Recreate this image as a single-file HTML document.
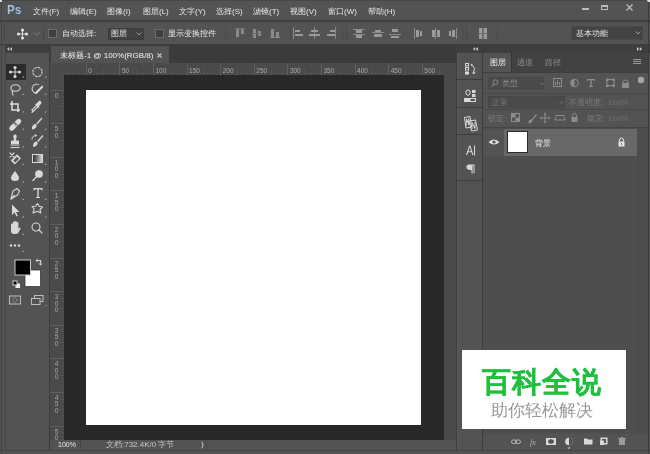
<!DOCTYPE html>
<html><head><meta charset="utf-8">
<style>
*{margin:0;padding:0;box-sizing:border-box}
html,body{width:650px;height:454px;overflow:hidden;-webkit-font-smoothing:antialiased;background:#535353;font-family:"Liberation Sans",sans-serif;color:#e6e6e6}
.a{position:absolute}
.t{position:absolute;white-space:nowrap;font-size:8px;line-height:9px;-webkit-font-smoothing:antialiased;will-change:transform}
svg{position:absolute;overflow:visible;will-change:transform}
.ic{fill:none;stroke:#dcdcdc;stroke-width:1.2}
.f{fill:#dcdcdc;stroke:none}
.dim{color:#8c8c8c}
</style></head><body>

<!-- ===== MENU BAR ===== -->
<div class="a" style="left:0;top:0;width:650px;height:21px;background:#535353"></div>
<div class="a" style="left:0;top:20px;width:650px;height:2px;background:#404040"></div>
<div class="a" style="left:7px;top:4px;width:17px;height:12px;background:#4d5257"></div>
<div class="t" style="left:7px;top:3px;font-size:13.5px;line-height:14px;font-weight:bold;color:#a9c2dc;letter-spacing:0.6px;transform:scaleX(0.84);transform-origin:0 0">Ps</div>
<div class="t" style="left:33px;top:7px">文件(F)</div>
<div class="t" style="left:70px;top:7px">编辑(E)</div>
<div class="t" style="left:107px;top:7px">图像(I)</div>
<div class="t" style="left:143px;top:7px">图层(L)</div>
<div class="t" style="left:179px;top:7px">文字(Y)</div>
<div class="t" style="left:216px;top:7px">选择(S)</div>
<div class="t" style="left:253px;top:7px">滤镜(T)</div>
<div class="t" style="left:290px;top:7px">视图(V)</div>
<div class="t" style="left:328px;top:7px">窗口(W)</div>
<div class="t" style="left:368px;top:7px">帮助(H)</div>
<!-- window controls -->
<div class="a" style="left:582px;top:8px;width:7px;height:2px;background:#bcbcbc"></div>
<div class="a" style="left:601px;top:5px;width:7px;height:5px;border:1px solid #bcbcbc;border-top-width:2px"></div>
<svg style="left:626px;top:4px" width="7" height="7"><path d="M0.5 0.5L6.5 6.5M6.5 0.5L0.5 6.5" stroke="#bcbcbc" stroke-width="1.3"/></svg>

<!-- ===== OPTIONS BAR ===== -->
<div class="a" style="left:0;top:22px;width:650px;height:22px;background:#535353"></div>
<div class="a" style="left:0;top:44px;width:650px;height:1px;background:#3c3c3c"></div>
<div class="a" style="left:4px;top:24px;width:1px;height:18px;background:#474747"></div>
<svg style="left:17px;top:28px" width="12" height="12"><path d="M5.5 2V10M1.5 6H9.5" stroke="#d8d8d8" stroke-width="1"/><circle cx="5.5" cy="2" r="1.6" fill="#e0e0e0"/><circle cx="5.5" cy="10" r="1.6" fill="#e0e0e0"/><circle cx="1.5" cy="6" r="1.6" fill="#e0e0e0"/><circle cx="9.5" cy="6" r="1.6" fill="#e0e0e0"/></svg>
<svg style="left:33px;top:32px" width="7" height="4"><path d="M0.5 0.5L3.5 3L6.5 0.5" stroke="#7e7e7e" fill="none"/></svg>
<div class="a" style="left:43px;top:26px;width:1px;height:16px;background:#474747"></div>
<div class="a" style="left:48px;top:29px;width:9px;height:9px;border:1px solid #6c6c6c;background:#3f3f3f"></div>
<div class="t" style="left:62px;top:29px">自动选择:</div>
<div class="a" style="left:108px;top:28px;width:36px;height:12px;background:#414141;border:1px solid #3c3c3c"></div>
<div class="t" style="left:111px;top:29px">图层</div>
<svg style="left:136px;top:32px" width="6" height="4"><path d="M0.5 0.5L3 3L5.5 0.5" stroke="#9a9a9a" fill="none"/></svg>
<div class="a" style="left:155px;top:29px;width:9px;height:9px;border:1px solid #6c6c6c;background:#3f3f3f"></div>
<div class="t" style="left:168px;top:29px">显示变换控件</div>
<div class="a" style="left:225px;top:26px;width:1px;height:15px;background:#4b4b4b"></div>
<!-- align icons -->
<div id="alignicons">
<div class="a" style="left:236px;top:29px;width:3px;height:8px;background:#8a8a8a"></div>
<div class="a" style="left:241px;top:29px;width:3px;height:5px;background:#8a8a8a"></div>
<div class="a" style="left:235px;top:28px;width:10px;height:1px;background:#6e6e6e"></div>

<div class="a" style="left:253px;top:29px;width:3px;height:9px;background:#8a8a8a"></div>
<div class="a" style="left:258px;top:31px;width:3px;height:5px;background:#8a8a8a"></div>
<div class="a" style="left:252px;top:33px;width:10px;height:1px;background:#6e6e6e"></div>

<div class="a" style="left:271px;top:29px;width:3px;height:8px;background:#8a8a8a"></div>
<div class="a" style="left:276px;top:32px;width:3px;height:5px;background:#8a8a8a"></div>
<div class="a" style="left:270px;top:37px;width:10px;height:1px;background:#8a8a8a"></div>

<div class="a" style="left:290px;top:27px;width:1px;height:13px;background:#4a4a4a"></div>
<div class="a" style="left:293px;top:27px;width:1px;height:12px;background:#8a8a8a"></div>
<div class="a" style="left:295px;top:30px;width:5px;height:2px;background:#9a9a9a"></div>
<div class="a" style="left:295px;top:34px;width:8px;height:2px;background:#9a9a9a"></div>

<div class="a" style="left:314px;top:27px;width:1px;height:12px;background:#8a8a8a"></div>
<div class="a" style="left:311px;top:30px;width:7px;height:2px;background:#9a9a9a"></div>
<div class="a" style="left:309px;top:34px;width:11px;height:2px;background:#9a9a9a"></div>

<div class="a" style="left:335px;top:27px;width:1px;height:12px;background:#8a8a8a"></div>
<div class="a" style="left:330px;top:30px;width:5px;height:2px;background:#9a9a9a"></div>
<div class="a" style="left:327px;top:34px;width:8px;height:2px;background:#9a9a9a"></div>

<div class="a" style="left:342px;top:26px;width:1px;height:15px;background:#4a4a4a"></div>
<div class="a" style="left:346px;top:26px;width:1px;height:15px;background:#4a4a4a"></div>

<div class="a" style="left:353px;top:29px;width:12px;height:1px;background:#8a8a8a"></div>
<div class="a" style="left:356px;top:30px;width:6px;height:3px;background:#9a9a9a"></div>
<div class="a" style="left:353px;top:34px;width:12px;height:1px;background:#8a8a8a"></div>
<div class="a" style="left:356px;top:35px;width:6px;height:3px;background:#9a9a9a"></div>

<div class="a" style="left:372px;top:32px;width:12px;height:1px;background:#8a8a8a"></div>
<div class="a" style="left:375px;top:30px;width:6px;height:2px;background:#9a9a9a"></div>
<div class="a" style="left:374px;top:34px;width:8px;height:3px;background:#9a9a9a"></div>

<div class="a" style="left:389px;top:34px;width:12px;height:1px;background:#8a8a8a"></div>
<div class="a" style="left:392px;top:29px;width:6px;height:3px;background:#9a9a9a"></div>
<div class="a" style="left:391px;top:36px;width:8px;height:2px;background:#9a9a9a"></div>

<div class="a" style="left:414px;top:28px;width:1px;height:11px;background:#8a8a8a"></div>
<div class="a" style="left:416px;top:30px;width:3px;height:7px;background:#9a9a9a"></div>
<div class="a" style="left:420px;top:31px;width:2px;height:5px;background:#9a9a9a"></div>

<div class="a" style="left:435px;top:28px;width:1px;height:11px;background:#8a8a8a"></div>
<div class="a" style="left:432px;top:30px;width:3px;height:7px;background:#9a9a9a"></div>
<div class="a" style="left:437px;top:30px;width:3px;height:7px;background:#9a9a9a"></div>

<div class="a" style="left:456px;top:28px;width:1px;height:11px;background:#8a8a8a"></div>
<div class="a" style="left:452px;top:30px;width:3px;height:7px;background:#9a9a9a"></div>
<div class="a" style="left:449px;top:31px;width:2px;height:5px;background:#9a9a9a"></div>

<div class="a" style="left:462px;top:26px;width:1px;height:15px;background:#4a4a4a"></div>
<div class="a" style="left:466px;top:26px;width:1px;height:15px;background:#4a4a4a"></div>

<div class="a" style="left:479px;top:28px;width:8px;height:11px;background:#9a9a9a"></div>
<div class="a" style="left:482px;top:28px;width:2px;height:11px;background:#6e6e6e"></div>
<div class="a" style="left:479px;top:33px;width:8px;height:1px;background:#6e6e6e"></div>
<div class="a" style="left:497px;top:26px;width:1px;height:15px;background:#4a4a4a"></div>
</div>
<!-- workspace dropdown -->
<div class="a" style="left:571px;top:26px;width:72px;height:14px;background:#434343;border:1px solid #4a4a4a"></div>
<div class="t" style="left:576px;top:29px">基本功能</div>
<svg style="left:635px;top:31px" width="6" height="4"><path d="M0.5 0.5L3 3L5.5 0.5" stroke="#9a9a9a" fill="none"/></svg>

<!-- ===== TOOL PANEL ===== -->
<div class="a" style="left:0;top:45px;width:6px;height:405px;background:#535353"></div>
<div class="a" style="left:5px;top:45px;width:45px;height:405px;background:#535353;border-left:1px solid #4a4a4a;border-right:1px solid #3c3c3c"></div>
<div class="a" style="left:5px;top:45px;width:45px;height:8px;background:#3e3e3e"></div>
<svg style="left:6px;top:46px" width="7" height="6"><path d="M1 3L3.2 1V5ZM3.8 3L6 1V5Z" fill="#c4c4c4"/></svg>
<div class="a" style="left:6px;top:64px;width:20px;height:16px;background:#2b2b2b"></div>
<svg style="left:0;top:0" width="50" height="320" viewBox="0 0 50 320">
<g fill="none" stroke="#d8d8d8" stroke-width="1.1" stroke-linecap="round" stroke-linejoin="round">
<!-- move -->
<path d="M15 68V76.5M10.5 72H19.5" stroke-width="1"/>
<!-- ellipse marquee -->
<circle cx="37.5" cy="72" r="4.6" stroke-dasharray="2 1.6" stroke="#c8c8c8"/>
<!-- lasso -->
<ellipse cx="15.5" cy="88" rx="4.6" ry="3.2"/>
<path d="M12.5 90.5Q12 93 13 95"/>
<!-- quick selection -->
<path d="M35 93Q30.5 90 33 86Q35 83.5 38.5 84.5" stroke-dasharray="1.6 1.2"/>
<!-- crop -->
<path d="M12 101V110H20M10 104H18V112" stroke-width="1.5" stroke-linecap="butt" stroke-linejoin="miter" stroke="#e0e0e0"/>
<!-- eyedropper -->
<path d="M32 112.5L32.8 111.7M33.2 111.5L31.8 110.2L37 105L38.4 106.4Z"/>
<!-- clone stamp -->
<path d="M11 145H19M11 147.5H19"/>
<path d="M32 139Q32 135.5 36 135.5" stroke-width="1"/>
<!-- eraser x -->
<path d="M10 153L14 157M14 153L10 157"/>
<!-- pen -->
<path d="M11 199L13 191L17 188.5L19.5 191L17.5 195L11 199Z"/>
<path d="M11 199L14.5 195.5"/>
<!-- custom shape -->
<path d="M33 213L34.2 209L32 206.5L35.5 206.2L37.5 203.5L39 206.3L42.5 207L40 209.5L40.8 213L37.5 211.3Z"/>
<!-- zoom -->
<circle cx="36" cy="227" r="4"/>
<path d="M39 230L42 233"/>
<!-- dodge -->
<circle cx="39" cy="174" r="3.3" fill="#d8d8d8"/>
<path d="M36.6 176.6L33 180.5" stroke-width="1.4"/>
</g>
<g fill="#d8d8d8" stroke="none">
<!-- move arrowheads -->
<circle cx="15" cy="67.5" r="1.6"/><circle cx="15" cy="76.5" r="1.6"/><circle cx="10.5" cy="72" r="1.6"/><circle cx="19.5" cy="72" r="1.6"/>
<!-- quick selection brush -->
<path d="M35 92.5L41 86.5Q42.5 85 43 86Q43.5 87 42 88.5L36.5 94Q35 94.5 35 92.5Z"/>
<path d="M36.2 103.8L38 102Q39.5 100 41 101.5Q42.5 103 40.5 104.5L38.7 106.3L39.5 107.2L38.6 108L35.2 104.6L36 103.8Z"/>
<!-- healing band-aid -->
<path d="M10 126.5L17 119.5Q18.8 117.8 20.5 119.5Q22.2 121.2 20.5 123L13.5 130Q11.7 131.7 10 130Q8.3 128.3 10 126.5Z"/><path d="M13.5 123.5L16.5 126.5L18 125L15 122Z" fill="#535353"/><circle cx="16" cy="124" r="0.7" fill="#d8d8d8"/><circle cx="14.5" cy="124.5" r="0.5" fill="#d8d8d8"/><circle cx="16.5" cy="125.5" r="0.5" fill="#d8d8d8"/>
<!-- brush -->
<path d="M32 129.5Q31.5 126.5 33.5 124.8Q35 123.5 36.3 124.5Q37.2 125.8 36 127.5Q34.5 129.5 32 129.5Z"/><path d="M36.2 123.6L41.5 117.6L42.4 118.5L37.2 124.5Z"/>
<!-- stamp -->
<path d="M13.3 136.3a1.7 1.7 0 1 1 3.4 0L15.9 140.5H19V144H11V140.5H14.1Z"/><path d="M35 134L37 135.5L35 137Z"/>
<!-- history brush -->
<path d="M33 147Q32.5 144 34.5 142.3Q36 141 37.3 142Q38.2 143.3 37 145Q35.5 147 33 147Z"/><path d="M37.2 141.1L42.5 135.1L43.4 136L38.2 142Z"/>
<!-- eraser -->
<path d="M10.8 160.5L17 154.3L21 158.3L14.8 164.5Z"/><path d="M13.3 160.5L17 156.8L19 158.8L15.3 162.5Z" fill="#535353"/>
<!-- blur drop -->
<path d="M15 171Q19 176 19 178Q19 181 15 181Q11 181 11 178Q11 176 15 171Z"/>
<!-- T -->
<path d="M33.5 188H42.5V190.5H41.8Q41.5 189.2 40 189.2H38.7V197H40V198H36V197H37.3V189.2H36Q34.5 189.2 34.2 190.5H33.5Z"/>
<!-- path selection arrow -->
<path d="M12 204.5V215L14.5 212.5L16.5 216.5L17.8 215.8L16 212H19.5Z"/>
<!-- hand -->
<path d="M11 229V224.5Q11 223.5 12 223.5Q12.8 223.5 12.8 224.5V227.5V222.5Q12.8 221.5 13.8 221.5Q14.7 221.5 14.7 222.5V227V222Q14.7 221 15.7 221Q16.6 221 16.6 222V227V223Q16.6 222 17.5 222Q18.4 222 18.4 223V229Q18.8 228 19.8 227.5Q20.7 227.3 20.7 228.2L18.5 232.5Q17.5 234 15.5 234H14Q11 234 11 231Z"/>
<!-- dots -->
<circle cx="11" cy="245.5" r="1.2"/><circle cx="15" cy="245.5" r="1.2"/><circle cx="19" cy="245.5" r="1.2"/>
<!-- small triangles -->
<path d="M22 77.5h1.8v-1.8z M44.5 77.5h1.8v-1.8z M22 95h1.8v-1.8z M44.5 95h1.8v-1.8z M22 112.5h1.8v-1.8z M44.5 112.5h1.8v-1.8z M22 130h1.8v-1.8z M44.5 130h1.8v-1.8z M22 147.5h1.8v-1.8z M44.5 147.5h1.8v-1.8z M22 165h1.8v-1.8z M44.5 165h1.8v-1.8z M22 182.5h1.8v-1.8z M44.5 182.5h1.8v-1.8z M22 200h1.8v-1.8z M44.5 200h1.8v-1.8z M22 217.5h1.8v-1.8z M44.5 217.5h1.8v-1.8z M22 235h1.8v-1.8z M22 252h1.8v-1.8z" fill="#b0b0b0"/>
</g>
<!-- gradient rect -->
<defs><linearGradient id="gr" x1="0" x2="1"><stop offset="0" stop-color="#222"/><stop offset="1" stop-color="#ddd"/></linearGradient></defs>
<rect x="32.5" y="154.5" width="10" height="8" fill="url(#gr)" stroke="#d8d8d8" stroke-width="1"/>
<!-- fg/bg colors -->
<rect x="25" y="270" width="15.5" height="16.5" fill="#fff" stroke="#3a3a3a" stroke-width="0.8"/>
<rect x="15" y="260" width="15.5" height="15" fill="#000" stroke="#c8c8c8" stroke-width="1"/>
<!-- default colors mini -->
<rect x="15.5" y="283.5" width="4.5" height="4.5" fill="#f0f0f0"/>
<rect x="12.5" y="280.5" width="5" height="5" fill="#d0d0d0"/>
<rect x="13.5" y="281.5" width="3" height="3" fill="#000"/>
<!-- swap -->
<path d="M37 260.5H40.5V263.5" fill="none" stroke="#d8d8d8" stroke-width="1.2"/>
<path d="M35.5 260.5L37.5 258.5V262.5zM40.5 265.5L38.5 263.5H42.5z" fill="#d8d8d8"/>
<!-- quick mask -->
<rect x="9.5" y="296" width="11" height="8" fill="none" stroke="#bdbdbd" stroke-width="1"/>
<circle cx="15" cy="300" r="2.2" fill="none" stroke="#bdbdbd" stroke-width="1" stroke-dasharray="1 1"/>
<!-- screen mode -->
<rect x="34.5" y="295.5" width="8.5" height="6" fill="none" stroke="#bdbdbd" stroke-width="1"/>
<rect x="31.5" y="298.5" width="8.5" height="6" fill="#535353" stroke="#bdbdbd" stroke-width="1"/>
<path d="M45 306h1.5v-1.5z" fill="#aaa"/>
</svg>


<!-- ===== DOCUMENT ===== -->
<div class="a" style="left:50px;top:45px;width:406px;height:18px;background:#3b3b3b"></div>
<div class="a" style="left:51px;top:46px;width:118px;height:17px;background:#535353"></div>
<div class="t" style="left:60px;top:51px;color:#f2f2f2">未标题-1 @ 100%(RGB/8)</div>
<svg style="left:157px;top:53px" width="5" height="5"><path d="M0.5 0.5L4.5 4.5M4.5 0.5L0.5 4.5" stroke="#c0c0c0" stroke-width="1.2"/></svg>
<!-- rulers -->
<div class="a" style="left:50px;top:63px;width:406px;height:12px;background:#4a4a4a"></div>
<div class="a" style="left:50px;top:63px;width:14px;height:377px;background:#4a4a4a"></div>
<div class="a" style="left:64px;top:75px;width:380px;height:365px;background:#282828"></div>
<div class="a" style="left:444px;top:75px;width:12px;height:365px;background:#4a4a4a"></div>
<!--RULERS-->
<svg style="left:64px;top:63px" width="380" height="12"><g stroke-width="1" shape-rendering="crispEdges">
<line x1="2.14" y1="9" x2="2.14" y2="12" stroke="#525252"/>
<line x1="5.50" y1="7" x2="5.50" y2="12" stroke="#585858"/>
<line x1="8.86" y1="9" x2="8.86" y2="12" stroke="#525252"/>
<line x1="12.22" y1="10" x2="12.22" y2="12" stroke="#525252"/>
<line x1="15.58" y1="9" x2="15.58" y2="12" stroke="#525252"/>
<line x1="18.94" y1="10" x2="18.94" y2="12" stroke="#525252"/>
<line x1="22.30" y1="0" x2="22.30" y2="12" stroke="#5f5f5f"/>
<line x1="25.66" y1="10" x2="25.66" y2="12" stroke="#525252"/>
<line x1="29.02" y1="9" x2="29.02" y2="12" stroke="#525252"/>
<line x1="32.38" y1="10" x2="32.38" y2="12" stroke="#525252"/>
<line x1="35.74" y1="9" x2="35.74" y2="12" stroke="#525252"/>
<line x1="39.10" y1="7" x2="39.10" y2="12" stroke="#585858"/>
<line x1="42.46" y1="9" x2="42.46" y2="12" stroke="#525252"/>
<line x1="45.82" y1="10" x2="45.82" y2="12" stroke="#525252"/>
<line x1="49.18" y1="9" x2="49.18" y2="12" stroke="#525252"/>
<line x1="52.54" y1="10" x2="52.54" y2="12" stroke="#525252"/>
<line x1="55.90" y1="0" x2="55.90" y2="12" stroke="#5f5f5f"/>
<line x1="59.26" y1="10" x2="59.26" y2="12" stroke="#525252"/>
<line x1="62.62" y1="9" x2="62.62" y2="12" stroke="#525252"/>
<line x1="65.98" y1="10" x2="65.98" y2="12" stroke="#525252"/>
<line x1="69.34" y1="9" x2="69.34" y2="12" stroke="#525252"/>
<line x1="72.70" y1="7" x2="72.70" y2="12" stroke="#585858"/>
<line x1="76.06" y1="9" x2="76.06" y2="12" stroke="#525252"/>
<line x1="79.42" y1="10" x2="79.42" y2="12" stroke="#525252"/>
<line x1="82.78" y1="9" x2="82.78" y2="12" stroke="#525252"/>
<line x1="86.14" y1="10" x2="86.14" y2="12" stroke="#525252"/>
<line x1="89.50" y1="0" x2="89.50" y2="12" stroke="#5f5f5f"/>
<line x1="92.86" y1="10" x2="92.86" y2="12" stroke="#525252"/>
<line x1="96.22" y1="9" x2="96.22" y2="12" stroke="#525252"/>
<line x1="99.58" y1="10" x2="99.58" y2="12" stroke="#525252"/>
<line x1="102.94" y1="9" x2="102.94" y2="12" stroke="#525252"/>
<line x1="106.30" y1="7" x2="106.30" y2="12" stroke="#585858"/>
<line x1="109.66" y1="9" x2="109.66" y2="12" stroke="#525252"/>
<line x1="113.02" y1="10" x2="113.02" y2="12" stroke="#525252"/>
<line x1="116.38" y1="9" x2="116.38" y2="12" stroke="#525252"/>
<line x1="119.74" y1="10" x2="119.74" y2="12" stroke="#525252"/>
<line x1="123.10" y1="0" x2="123.10" y2="12" stroke="#5f5f5f"/>
<line x1="126.46" y1="10" x2="126.46" y2="12" stroke="#525252"/>
<line x1="129.82" y1="9" x2="129.82" y2="12" stroke="#525252"/>
<line x1="133.18" y1="10" x2="133.18" y2="12" stroke="#525252"/>
<line x1="136.54" y1="9" x2="136.54" y2="12" stroke="#525252"/>
<line x1="139.90" y1="7" x2="139.90" y2="12" stroke="#585858"/>
<line x1="143.26" y1="9" x2="143.26" y2="12" stroke="#525252"/>
<line x1="146.62" y1="10" x2="146.62" y2="12" stroke="#525252"/>
<line x1="149.98" y1="9" x2="149.98" y2="12" stroke="#525252"/>
<line x1="153.34" y1="10" x2="153.34" y2="12" stroke="#525252"/>
<line x1="156.70" y1="0" x2="156.70" y2="12" stroke="#5f5f5f"/>
<line x1="160.06" y1="10" x2="160.06" y2="12" stroke="#525252"/>
<line x1="163.42" y1="9" x2="163.42" y2="12" stroke="#525252"/>
<line x1="166.78" y1="10" x2="166.78" y2="12" stroke="#525252"/>
<line x1="170.14" y1="9" x2="170.14" y2="12" stroke="#525252"/>
<line x1="173.50" y1="7" x2="173.50" y2="12" stroke="#585858"/>
<line x1="176.86" y1="9" x2="176.86" y2="12" stroke="#525252"/>
<line x1="180.22" y1="10" x2="180.22" y2="12" stroke="#525252"/>
<line x1="183.58" y1="9" x2="183.58" y2="12" stroke="#525252"/>
<line x1="186.94" y1="10" x2="186.94" y2="12" stroke="#525252"/>
<line x1="190.30" y1="0" x2="190.30" y2="12" stroke="#5f5f5f"/>
<line x1="193.66" y1="10" x2="193.66" y2="12" stroke="#525252"/>
<line x1="197.02" y1="9" x2="197.02" y2="12" stroke="#525252"/>
<line x1="200.38" y1="10" x2="200.38" y2="12" stroke="#525252"/>
<line x1="203.74" y1="9" x2="203.74" y2="12" stroke="#525252"/>
<line x1="207.10" y1="7" x2="207.10" y2="12" stroke="#585858"/>
<line x1="210.46" y1="9" x2="210.46" y2="12" stroke="#525252"/>
<line x1="213.82" y1="10" x2="213.82" y2="12" stroke="#525252"/>
<line x1="217.18" y1="9" x2="217.18" y2="12" stroke="#525252"/>
<line x1="220.54" y1="10" x2="220.54" y2="12" stroke="#525252"/>
<line x1="223.90" y1="0" x2="223.90" y2="12" stroke="#5f5f5f"/>
<line x1="227.26" y1="10" x2="227.26" y2="12" stroke="#525252"/>
<line x1="230.62" y1="9" x2="230.62" y2="12" stroke="#525252"/>
<line x1="233.98" y1="10" x2="233.98" y2="12" stroke="#525252"/>
<line x1="237.34" y1="9" x2="237.34" y2="12" stroke="#525252"/>
<line x1="240.70" y1="7" x2="240.70" y2="12" stroke="#585858"/>
<line x1="244.06" y1="9" x2="244.06" y2="12" stroke="#525252"/>
<line x1="247.42" y1="10" x2="247.42" y2="12" stroke="#525252"/>
<line x1="250.78" y1="9" x2="250.78" y2="12" stroke="#525252"/>
<line x1="254.14" y1="10" x2="254.14" y2="12" stroke="#525252"/>
<line x1="257.50" y1="0" x2="257.50" y2="12" stroke="#5f5f5f"/>
<line x1="260.86" y1="10" x2="260.86" y2="12" stroke="#525252"/>
<line x1="264.22" y1="9" x2="264.22" y2="12" stroke="#525252"/>
<line x1="267.58" y1="10" x2="267.58" y2="12" stroke="#525252"/>
<line x1="270.94" y1="9" x2="270.94" y2="12" stroke="#525252"/>
<line x1="274.30" y1="7" x2="274.30" y2="12" stroke="#585858"/>
<line x1="277.66" y1="9" x2="277.66" y2="12" stroke="#525252"/>
<line x1="281.02" y1="10" x2="281.02" y2="12" stroke="#525252"/>
<line x1="284.38" y1="9" x2="284.38" y2="12" stroke="#525252"/>
<line x1="287.74" y1="10" x2="287.74" y2="12" stroke="#525252"/>
<line x1="291.10" y1="0" x2="291.10" y2="12" stroke="#5f5f5f"/>
<line x1="294.46" y1="10" x2="294.46" y2="12" stroke="#525252"/>
<line x1="297.82" y1="9" x2="297.82" y2="12" stroke="#525252"/>
<line x1="301.18" y1="10" x2="301.18" y2="12" stroke="#525252"/>
<line x1="304.54" y1="9" x2="304.54" y2="12" stroke="#525252"/>
<line x1="307.90" y1="7" x2="307.90" y2="12" stroke="#585858"/>
<line x1="311.26" y1="9" x2="311.26" y2="12" stroke="#525252"/>
<line x1="314.62" y1="10" x2="314.62" y2="12" stroke="#525252"/>
<line x1="317.98" y1="9" x2="317.98" y2="12" stroke="#525252"/>
<line x1="321.34" y1="10" x2="321.34" y2="12" stroke="#525252"/>
<line x1="324.70" y1="0" x2="324.70" y2="12" stroke="#5f5f5f"/>
<line x1="328.06" y1="10" x2="328.06" y2="12" stroke="#525252"/>
<line x1="331.42" y1="9" x2="331.42" y2="12" stroke="#525252"/>
<line x1="334.78" y1="10" x2="334.78" y2="12" stroke="#525252"/>
<line x1="338.14" y1="9" x2="338.14" y2="12" stroke="#525252"/>
<line x1="341.50" y1="7" x2="341.50" y2="12" stroke="#585858"/>
<line x1="344.86" y1="9" x2="344.86" y2="12" stroke="#525252"/>
<line x1="348.22" y1="10" x2="348.22" y2="12" stroke="#525252"/>
<line x1="351.58" y1="9" x2="351.58" y2="12" stroke="#525252"/>
<line x1="354.94" y1="10" x2="354.94" y2="12" stroke="#525252"/>
<line x1="358.30" y1="0" x2="358.30" y2="12" stroke="#5f5f5f"/>
<line x1="361.66" y1="10" x2="361.66" y2="12" stroke="#525252"/>
<line x1="365.02" y1="9" x2="365.02" y2="12" stroke="#525252"/>
<line x1="368.38" y1="10" x2="368.38" y2="12" stroke="#525252"/>
<line x1="371.74" y1="9" x2="371.74" y2="12" stroke="#525252"/>
<line x1="375.10" y1="7" x2="375.10" y2="12" stroke="#585858"/>
<line x1="378.46" y1="9" x2="378.46" y2="12" stroke="#525252"/>
</g><g fill="#a8a8a8" font-size="6.5" font-family="Liberation Sans">
<text x="24.30" y="10">0</text>
<text x="57.90" y="10">50</text>
<text x="91.50" y="10">100</text>
<text x="125.10" y="10">150</text>
<text x="158.70" y="10">200</text>
<text x="192.30" y="10">250</text>
<text x="225.90" y="10">300</text>
<text x="259.50" y="10">350</text>
<text x="293.10" y="10">400</text>
<text x="326.70" y="10">450</text>
<text x="360.30" y="10">500</text>
</g></svg>
<svg style="left:50px;top:75px" width="14" height="365"><g stroke-width="1" shape-rendering="crispEdges">
<line x1="11" y1="1.56" x2="14" y2="1.56" stroke="#525252"/>
<line x1="12" y1="4.92" x2="14" y2="4.92" stroke="#525252"/>
<line x1="11" y1="8.28" x2="14" y2="8.28" stroke="#525252"/>
<line x1="12" y1="11.64" x2="14" y2="11.64" stroke="#525252"/>
<line x1="0" y1="15.00" x2="14" y2="15.00" stroke="#5f5f5f"/>
<line x1="12" y1="18.36" x2="14" y2="18.36" stroke="#525252"/>
<line x1="11" y1="21.72" x2="14" y2="21.72" stroke="#525252"/>
<line x1="12" y1="25.08" x2="14" y2="25.08" stroke="#525252"/>
<line x1="11" y1="28.44" x2="14" y2="28.44" stroke="#525252"/>
<line x1="9" y1="31.80" x2="14" y2="31.80" stroke="#585858"/>
<line x1="11" y1="35.16" x2="14" y2="35.16" stroke="#525252"/>
<line x1="12" y1="38.52" x2="14" y2="38.52" stroke="#525252"/>
<line x1="11" y1="41.88" x2="14" y2="41.88" stroke="#525252"/>
<line x1="12" y1="45.24" x2="14" y2="45.24" stroke="#525252"/>
<line x1="0" y1="48.60" x2="14" y2="48.60" stroke="#5f5f5f"/>
<line x1="12" y1="51.96" x2="14" y2="51.96" stroke="#525252"/>
<line x1="11" y1="55.32" x2="14" y2="55.32" stroke="#525252"/>
<line x1="12" y1="58.68" x2="14" y2="58.68" stroke="#525252"/>
<line x1="11" y1="62.04" x2="14" y2="62.04" stroke="#525252"/>
<line x1="9" y1="65.40" x2="14" y2="65.40" stroke="#585858"/>
<line x1="11" y1="68.76" x2="14" y2="68.76" stroke="#525252"/>
<line x1="12" y1="72.12" x2="14" y2="72.12" stroke="#525252"/>
<line x1="11" y1="75.48" x2="14" y2="75.48" stroke="#525252"/>
<line x1="12" y1="78.84" x2="14" y2="78.84" stroke="#525252"/>
<line x1="0" y1="82.20" x2="14" y2="82.20" stroke="#5f5f5f"/>
<line x1="12" y1="85.56" x2="14" y2="85.56" stroke="#525252"/>
<line x1="11" y1="88.92" x2="14" y2="88.92" stroke="#525252"/>
<line x1="12" y1="92.28" x2="14" y2="92.28" stroke="#525252"/>
<line x1="11" y1="95.64" x2="14" y2="95.64" stroke="#525252"/>
<line x1="9" y1="99.00" x2="14" y2="99.00" stroke="#585858"/>
<line x1="11" y1="102.36" x2="14" y2="102.36" stroke="#525252"/>
<line x1="12" y1="105.72" x2="14" y2="105.72" stroke="#525252"/>
<line x1="11" y1="109.08" x2="14" y2="109.08" stroke="#525252"/>
<line x1="12" y1="112.44" x2="14" y2="112.44" stroke="#525252"/>
<line x1="0" y1="115.80" x2="14" y2="115.80" stroke="#5f5f5f"/>
<line x1="12" y1="119.16" x2="14" y2="119.16" stroke="#525252"/>
<line x1="11" y1="122.52" x2="14" y2="122.52" stroke="#525252"/>
<line x1="12" y1="125.88" x2="14" y2="125.88" stroke="#525252"/>
<line x1="11" y1="129.24" x2="14" y2="129.24" stroke="#525252"/>
<line x1="9" y1="132.60" x2="14" y2="132.60" stroke="#585858"/>
<line x1="11" y1="135.96" x2="14" y2="135.96" stroke="#525252"/>
<line x1="12" y1="139.32" x2="14" y2="139.32" stroke="#525252"/>
<line x1="11" y1="142.68" x2="14" y2="142.68" stroke="#525252"/>
<line x1="12" y1="146.04" x2="14" y2="146.04" stroke="#525252"/>
<line x1="0" y1="149.40" x2="14" y2="149.40" stroke="#5f5f5f"/>
<line x1="12" y1="152.76" x2="14" y2="152.76" stroke="#525252"/>
<line x1="11" y1="156.12" x2="14" y2="156.12" stroke="#525252"/>
<line x1="12" y1="159.48" x2="14" y2="159.48" stroke="#525252"/>
<line x1="11" y1="162.84" x2="14" y2="162.84" stroke="#525252"/>
<line x1="9" y1="166.20" x2="14" y2="166.20" stroke="#585858"/>
<line x1="11" y1="169.56" x2="14" y2="169.56" stroke="#525252"/>
<line x1="12" y1="172.92" x2="14" y2="172.92" stroke="#525252"/>
<line x1="11" y1="176.28" x2="14" y2="176.28" stroke="#525252"/>
<line x1="12" y1="179.64" x2="14" y2="179.64" stroke="#525252"/>
<line x1="0" y1="183.00" x2="14" y2="183.00" stroke="#5f5f5f"/>
<line x1="12" y1="186.36" x2="14" y2="186.36" stroke="#525252"/>
<line x1="11" y1="189.72" x2="14" y2="189.72" stroke="#525252"/>
<line x1="12" y1="193.08" x2="14" y2="193.08" stroke="#525252"/>
<line x1="11" y1="196.44" x2="14" y2="196.44" stroke="#525252"/>
<line x1="9" y1="199.80" x2="14" y2="199.80" stroke="#585858"/>
<line x1="11" y1="203.16" x2="14" y2="203.16" stroke="#525252"/>
<line x1="12" y1="206.52" x2="14" y2="206.52" stroke="#525252"/>
<line x1="11" y1="209.88" x2="14" y2="209.88" stroke="#525252"/>
<line x1="12" y1="213.24" x2="14" y2="213.24" stroke="#525252"/>
<line x1="0" y1="216.60" x2="14" y2="216.60" stroke="#5f5f5f"/>
<line x1="12" y1="219.96" x2="14" y2="219.96" stroke="#525252"/>
<line x1="11" y1="223.32" x2="14" y2="223.32" stroke="#525252"/>
<line x1="12" y1="226.68" x2="14" y2="226.68" stroke="#525252"/>
<line x1="11" y1="230.04" x2="14" y2="230.04" stroke="#525252"/>
<line x1="9" y1="233.40" x2="14" y2="233.40" stroke="#585858"/>
<line x1="11" y1="236.76" x2="14" y2="236.76" stroke="#525252"/>
<line x1="12" y1="240.12" x2="14" y2="240.12" stroke="#525252"/>
<line x1="11" y1="243.48" x2="14" y2="243.48" stroke="#525252"/>
<line x1="12" y1="246.84" x2="14" y2="246.84" stroke="#525252"/>
<line x1="0" y1="250.20" x2="14" y2="250.20" stroke="#5f5f5f"/>
<line x1="12" y1="253.56" x2="14" y2="253.56" stroke="#525252"/>
<line x1="11" y1="256.92" x2="14" y2="256.92" stroke="#525252"/>
<line x1="12" y1="260.28" x2="14" y2="260.28" stroke="#525252"/>
<line x1="11" y1="263.64" x2="14" y2="263.64" stroke="#525252"/>
<line x1="9" y1="267.00" x2="14" y2="267.00" stroke="#585858"/>
<line x1="11" y1="270.36" x2="14" y2="270.36" stroke="#525252"/>
<line x1="12" y1="273.72" x2="14" y2="273.72" stroke="#525252"/>
<line x1="11" y1="277.08" x2="14" y2="277.08" stroke="#525252"/>
<line x1="12" y1="280.44" x2="14" y2="280.44" stroke="#525252"/>
<line x1="0" y1="283.80" x2="14" y2="283.80" stroke="#5f5f5f"/>
<line x1="12" y1="287.16" x2="14" y2="287.16" stroke="#525252"/>
<line x1="11" y1="290.52" x2="14" y2="290.52" stroke="#525252"/>
<line x1="12" y1="293.88" x2="14" y2="293.88" stroke="#525252"/>
<line x1="11" y1="297.24" x2="14" y2="297.24" stroke="#525252"/>
<line x1="9" y1="300.60" x2="14" y2="300.60" stroke="#585858"/>
<line x1="11" y1="303.96" x2="14" y2="303.96" stroke="#525252"/>
<line x1="12" y1="307.32" x2="14" y2="307.32" stroke="#525252"/>
<line x1="11" y1="310.68" x2="14" y2="310.68" stroke="#525252"/>
<line x1="12" y1="314.04" x2="14" y2="314.04" stroke="#525252"/>
<line x1="0" y1="317.40" x2="14" y2="317.40" stroke="#5f5f5f"/>
<line x1="12" y1="320.76" x2="14" y2="320.76" stroke="#525252"/>
<line x1="11" y1="324.12" x2="14" y2="324.12" stroke="#525252"/>
<line x1="12" y1="327.48" x2="14" y2="327.48" stroke="#525252"/>
<line x1="11" y1="330.84" x2="14" y2="330.84" stroke="#525252"/>
<line x1="9" y1="334.20" x2="14" y2="334.20" stroke="#585858"/>
<line x1="11" y1="337.56" x2="14" y2="337.56" stroke="#525252"/>
<line x1="12" y1="340.92" x2="14" y2="340.92" stroke="#525252"/>
<line x1="11" y1="344.28" x2="14" y2="344.28" stroke="#525252"/>
<line x1="12" y1="347.64" x2="14" y2="347.64" stroke="#525252"/>
<line x1="0" y1="351.00" x2="14" y2="351.00" stroke="#5f5f5f"/>
<line x1="12" y1="354.36" x2="14" y2="354.36" stroke="#525252"/>
<line x1="11" y1="357.72" x2="14" y2="357.72" stroke="#525252"/>
<line x1="12" y1="361.08" x2="14" y2="361.08" stroke="#525252"/>
<line x1="11" y1="364.44" x2="14" y2="364.44" stroke="#525252"/>
</g><g fill="#a8a8a8" font-size="6.5" font-family="Liberation Sans" text-anchor="middle">
<text x="6.5" y="22.50">0</text>
<text x="6.5" y="56.10">5</text>
<text x="6.5" y="62.60">0</text>
<text x="6.5" y="89.70">1</text>
<text x="6.5" y="96.20">0</text>
<text x="6.5" y="102.70">0</text>
<text x="6.5" y="123.30">1</text>
<text x="6.5" y="129.80">5</text>
<text x="6.5" y="136.30">0</text>
<text x="6.5" y="156.90">2</text>
<text x="6.5" y="163.40">0</text>
<text x="6.5" y="169.90">0</text>
<text x="6.5" y="190.50">2</text>
<text x="6.5" y="197.00">5</text>
<text x="6.5" y="203.50">0</text>
<text x="6.5" y="224.10">3</text>
<text x="6.5" y="230.60">0</text>
<text x="6.5" y="237.10">0</text>
<text x="6.5" y="257.70">3</text>
<text x="6.5" y="264.20">5</text>
<text x="6.5" y="270.70">0</text>
<text x="6.5" y="291.30">4</text>
<text x="6.5" y="297.80">0</text>
<text x="6.5" y="304.30">0</text>
<text x="6.5" y="324.90">4</text>
<text x="6.5" y="331.40">5</text>
<text x="6.5" y="337.90">0</text>
<text x="6.5" y="358.50">5</text>
<text x="6.5" y="365.00">0</text>
</g></svg>
<!--/RULERS-->
<div class="a" style="left:86px;top:90px;width:335px;height:335px;background:#ffffff"></div>
<!-- status bar -->
<div class="a" style="left:50px;top:440px;width:406px;height:10px;background:#535353"></div>
<div class="t" style="left:58px;top:441px;font-size:7px;line-height:8px;color:#e8e8e8">100%</div>
<div class="a" style="left:80px;top:440px;width:1px;height:10px;background:#474747"></div>
<div class="t" style="left:106px;top:441px;font-size:8px;line-height:8px;color:#c8c8c8">文档:732.4K/0 字节</div>
<svg style="left:201px;top:441px" width="4" height="8"><path d="M0.8 0.8Q3.2 4 0.8 7.2" fill="none" stroke="#c8c8c8" stroke-width="1"/></svg>
<div class="a" style="left:206px;top:440px;width:1px;height:10px;background:#4a4a4a"></div>

<!-- ===== RIGHT PANELS ===== -->
<div class="a" style="left:456px;top:45px;width:194px;height:8px;background:#3e3e3e"></div>
<div class="a" style="left:456px;top:53px;width:27px;height:397px;background:#535353;border-left:1px solid #3c3c3c;border-right:1px solid #3c3c3c"></div>
<div class="a" style="left:457px;top:53px;width:1px;height:397px;background:#5a5a5a"></div>
<div class="a" style="left:483px;top:53px;width:165px;height:397px;background:#535353"></div>
<div class="a" style="left:483px;top:53px;width:165px;height:19px;background:#424242"></div>
<div class="a" style="left:483px;top:53px;width:28px;height:19px;background:#535353"></div>
<div class="t" style="left:490px;top:58px;color:#f0f0f0">图层</div>
<div class="t dim" style="left:517px;top:58px">通道</div>
<div class="t dim" style="left:545px;top:58px">路径</div>
<!--RIGHTPANEL-->
<!-- header strip arrows -->
<svg style="left:472px;top:46px" width="7" height="6"><path d="M1 3L3.2 1V5ZM3.8 3L6 1V5Z" fill="#c4c4c4"/></svg>
<svg style="left:636px;top:46px" width="7" height="6"><path d="M6 3L3.8 1V5ZM3.2 3L1 1V5Z" fill="#c4c4c4"/></svg>
<!-- icon column separators -->
<div class="a" style="left:457px;top:79px;width:25px;height:1px;background:#3c3c3c"></div>
<div class="a" style="left:457px;top:107px;width:25px;height:1px;background:#3c3c3c"></div>
<div class="a" style="left:457px;top:134px;width:25px;height:1px;background:#3c3c3c"></div>
<div class="a" style="left:457px;top:180px;width:25px;height:1px;background:#3c3c3c"></div>
<svg style="left:456px;top:53px" width="27" height="130" viewBox="456 53 27 130">
<g fill="none" stroke="#d8d8d8" stroke-width="1">
<rect x="465.5" y="63.5" width="3" height="2.5"/>
<rect x="465.5" y="67.5" width="3" height="2.5"/>
<path d="M471.5 65Q476.5 67.5 473 73"/>
<path d="M466 91L468 90L470 91V94L468 95.5L466 94Z"/>
<rect x="464.5" y="98.5" width="11" height="3"/>
<path d="M464.5 117.5L470 116.5L471.5 127L466 128Z"/>
<path d="M469 121L475.5 120L477.5 130L471.5 131Z"/>
<path d="M466 126L466.5 119M466.5 119L469 125M469 125L468.5 118.5"/>
<path d="M472 129L472 122.5L475 128.5L475 122"/>
<path d="M474.5 145.5V155.5"/>
</g>
<g fill="#d8d8d8">
<rect x="465" y="71.5" width="4" height="3"/>
<path d="M470.5 64.5L472.5 63.5L472 66.5z"/>
<path d="M472 73.5L474.5 74L475.5 71.5z"/>
<rect x="472" y="90" width="3.5" height="3"/>
<rect x="472" y="94" width="3.5" height="3"/>
<rect x="464.5" y="98.5" width="6" height="3"/>
<path d="M466 155L469.2 145.5H470.3L473.5 155H472.3L471.5 152.3H468L467.2 155ZM468.4 151.2H471.1L469.75 147Z"/>
<path d="M469 164.5H474.5V173.5H473.5V165.5H472.5V173.5H471.5V170Q466.5 170 466.5 167.2Q466.5 164.5 469 164.5Z"/>
</g>
</svg>
<!-- panel tabs -->
<div class="a" style="left:511px;top:53px;width:1px;height:19px;background:#353535"></div>
<svg style="left:633px;top:59px" width="9" height="6"><path d="M0 0.5H8M0 2.5H8M0 4.5H8" stroke="#9a9a9a" stroke-width="1"/></svg>
<!-- filter row -->
<div class="a" style="left:483px;top:72px;width:165px;height:1px;background:#3e3e3e"></div>
<div class="a" style="left:488px;top:77px;width:56px;height:12px;background:#4a4a4a;border:1px solid #474747"></div>
<svg style="left:491px;top:79px" width="8" height="8"><circle cx="4.5" cy="3.2" r="2.4" fill="none" stroke="#8c8c8c" stroke-width="1"/><path d="M3 5L1 7.5" stroke="#8c8c8c" stroke-width="1.2"/></svg>
<div class="t dim" style="left:502px;top:79px">类型</div>
<svg style="left:540px;top:82px" width="5" height="3"><path d="M0.5 0.5L2.5 2.5L4.5 0.5" stroke="#777" fill="none"/></svg>
<svg style="left:550px;top:76px" width="98" height="14">
<g fill="none" stroke="#8c8c8c" stroke-width="1">
<rect x="3.5" y="2.5" width="8" height="8"/>
<path d="M5.5 9V5.5M7.5 9V4.5M9.5 9V6"/>
<circle cx="24.5" cy="7" r="3.8"/>
<path d="M58 3.5H63M58 9.5H63M57 4.5V9M64 4.5V9"/>
<path d="M73 11V6.5Q73 4 75.5 4Q78 4 78 6.5V7.5"/>
</g>
<g fill="#8c8c8c">
<path d="M24.5 3.2A3.8 3.8 0 0 0 24.5 10.8z"/>
<path d="M37 3H45V5H44Q43.7 4 42.5 4H41.7V10H43V11H39V10H40.3V4H39.5Q38.3 4 38 5H37Z"/>
<rect x="56" y="2.5" width="2.5" height="2.5"/><rect x="62.5" y="2.5" width="2.5" height="2.5"/>
<rect x="56" y="8.5" width="2.5" height="2.5"/><rect x="62.5" y="8.5" width="2.5" height="2.5"/>
<rect x="72" y="7" width="7" height="5"/>
<circle cx="91" cy="4" r="3.2" fill="#a6a6a6"/>
</g>
</svg>
<!-- blend row -->
<div class="a" style="left:483px;top:93px;width:165px;height:1px;background:#484848"></div>
<div class="a" style="left:488px;top:96px;width:77px;height:12px;background:#4a4a4a;border:1px solid #474747"></div>
<div class="t dim" style="left:492px;top:98px;color:#7c7c7c">正常</div>
<svg style="left:559px;top:101px" width="5" height="3"><path d="M0.5 0.5L2.5 2.5L4.5 0.5" stroke="#6a6a6a" fill="none"/></svg>
<div class="t" style="left:569px;top:98px;color:#7c7c7c">不透明度:</div>
<div class="t" style="left:608px;top:98px;color:#6e6e6e">100%</div>
<!-- lock row -->
<div class="a" style="left:483px;top:109px;width:165px;height:1px;background:#484848"></div>
<div class="t" style="left:488px;top:114px;color:#7c7c7c">锁定:</div>
<svg style="left:508px;top:111px" width="75" height="14">
<g fill="none" stroke="#8c8c8c" stroke-width="1">
<rect x="3.5" y="2.5" width="8" height="8"/>
<path d="M23.5 9.5L28.5 3.5" stroke-width="1.2"/><path d="M21 12Q20.5 10 22 9Q23.5 8.5 24 10Q23.5 12 21 12Z" fill="#8c8c8c"/>
<path d="M37 3V11M33 7H41"/>
<path d="M48 4.5H56L57 9H47Z"/>
<path d="M64.5 6V4.5Q64.5 2.5 66.5 2.5Q68.5 2.5 68.5 4.5V6"/>
</g>
<g fill="#8c8c8c">
<rect x="4" y="3" width="3.5" height="3.5"/><rect x="7.5" y="6.5" width="3.5" height="3.5"/>
<path d="M37 1.5L38.5 3.5H35.5zM37 12.5L38.5 10.5H35.5zM31.5 7L33.5 5.5V8.5zM42.5 7L40.5 5.5V8.5z"/>
<rect x="63.5" y="6" width="6" height="5"/>
</g>
</svg>
<div class="t" style="left:587px;top:114px;color:#7c7c7c">填充:</div>
<div class="t" style="left:608px;top:114px;color:#6e6e6e">100%</div>
<div class="a" style="left:483px;top:127px;width:165px;height:1px;background:#444"></div>
<!-- layer list area -->
<div class="a" style="left:483px;top:128px;width:155px;height:305px;background:#4e4e4e"></div>
<div class="a" style="left:638px;top:128px;width:10px;height:305px;background:#4e4e4e;border-left:1px solid #484848"></div>
<div class="a" style="left:504px;top:129px;width:133px;height:27px;background:#686868"></div>
<div class="a" style="left:483px;top:129px;width:21px;height:27px;background:#535353"></div>
<svg style="left:488px;top:138px" width="12" height="8"><path d="M0.5 4Q6 -1 11.5 4Q6 9 0.5 4Z" fill="#e0e0e0"/><circle cx="6" cy="4" r="1.6" fill="#535353"/></svg>
<div class="a" style="left:507px;top:131px;width:21px;height:22px;background:#fff;border:1px solid #2a2a2a"></div>
<div class="t" style="left:535px;top:139px;color:#f0f0f0">背景</div>
<svg style="left:617px;top:137px" width="9" height="10"><path d="M2.5 4.5V3Q2.5 1 4.5 1Q6.5 1 6.5 3V4.5" fill="none" stroke="#e6e6e6" stroke-width="1"/><rect x="1.5" y="4.5" width="6" height="5" fill="#e6e6e6"/><rect x="4" y="6" width="1" height="2" fill="#686868"/></svg>
<!-- bottom icon bar -->
<div class="a" style="left:483px;top:433px;width:165px;height:1px;background:#505050"></div>
<svg style="left:483px;top:433px" width="165" height="17">
<g fill="none" stroke="#b8b8b8" stroke-width="1">
<rect x="28.5" y="7" width="5" height="3.5" rx="1.7"/><rect x="32.5" y="7" width="5" height="3.5" rx="1.7"/>
</g>
<text x="47" y="12" font-size="8" font-style="italic" font-family="Liberation Serif" fill="#b8b8b8">fx</text>
<g fill="#d8d8d8">
<path d="M63 5H73V12H63Z M68 6.3A2.3 2.3 0 1 0 68 10.7A2.3 2.3 0 1 0 68 6.3Z" fill-rule="evenodd"/>
<circle cx="86" cy="8.5" r="3.8"/>
<path d="M101 5.5H104L105 6.5H109.5V11.5H101Z"/>
<path d="M117.5 4.5H124.5V11.5H117.5Z M119 6V10H123V6Z" fill-rule="evenodd"/>
<rect x="117" y="7.5" width="4" height="4.5"/>
<rect x="136" y="6" width="6" height="6" fill="#9a9a9a"/><rect x="135" y="5" width="8" height="1" fill="#9a9a9a"/><rect x="138" y="4" width="2" height="1" fill="#9a9a9a"/>
</g>
<path d="M86 4.7A3.8 3.8 0 0 1 86 12.3Z" fill="#535353"/>
<path d="M84.5 14.5L86 16L87.5 14.5Z" fill="#d8d8d8"/>
</svg>
<!--/RIGHTPANEL-->
<!-- window border -->
<div class="a" style="left:648px;top:0;width:1px;height:454px;background:#3a3a3a"></div>
<div class="a" style="left:0;top:450px;width:650px;height:1px;background:#444"></div>
<div class="a" style="left:1px;top:0;width:1px;height:454px;background:#444"></div>

<div class="a" style="left:0;top:0;width:650px;height:1px;background:#474747"></div>
<div class="a" style="left:647px;top:0;width:3px;height:2px;background:#e8e8e8;border-radius:0 0 0 2px"></div>
<div class="a" style="left:0;top:0;width:2px;height:2px;background:#d8d8d8"></div>
<!-- ===== WATERMARK ===== -->
<div class="a" style="left:462px;top:350px;width:164px;height:79px;background:#fff"></div>
<div class="t" style="left:482px;top:366px;font-size:29px;line-height:32px;color:#1ec03d;font-weight:bold;letter-spacing:1px;-webkit-text-stroke:0.2px #1ec03d">百科全说</div>
<div class="t" style="left:491px;top:401px;font-size:17px;line-height:19px;color:#999">助你轻松解决</div>
</body></html>
